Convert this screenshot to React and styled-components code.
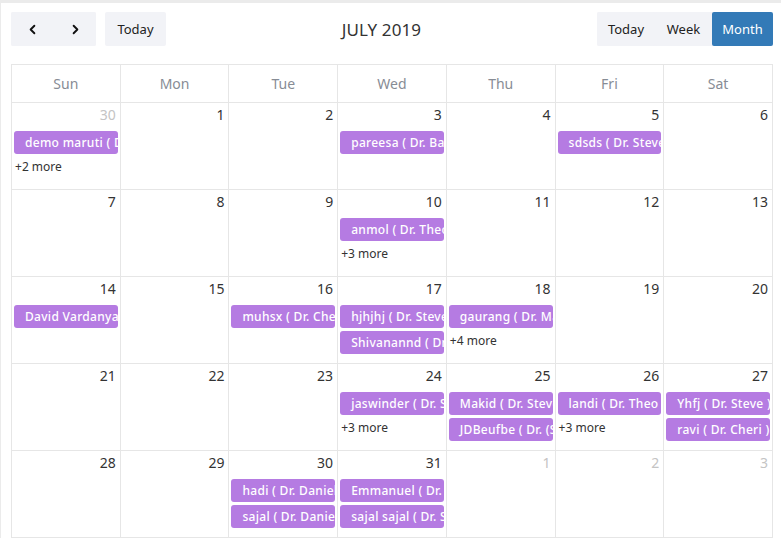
import React from "react";
import styled, { createGlobalStyle } from "styled-components";
import { ChevronLeft, ChevronRight } from "lucide-react";

const GlobalStyle = createGlobalStyle`
  body {
    margin: 0;
    background: #ebebeb;
    font-family: "Noto Sans", "Open Sans", sans-serif;
    overflow: hidden;
  }
`;

const Card = styled.div`
  margin: 3px 0 0 1px;
  padding: 9px 8px 0 10px;
  background: #fff;
  height: 535px;
  box-sizing: border-box;
`;

const Toolbar = styled.div`
  display: flex;
  align-items: center;
  height: 34px;
  margin-bottom: 18px;
`;

const Left = styled.div`
  display: flex;
  gap: 9px;
`;

const Group = styled.div`
  display: flex;
  background: #f2f3f7;
  border-radius: 2px;
`;

const Button = styled.button`
  border: 0;
  height: 34px;
  padding: 0;
  font-family: inherit;
  font-size: 13px;
  color: ${(p) => (p.$active ? "#fff" : "#222")};
  background: ${(p) => (p.$active ? "#337ab7" : "#f2f3f7")};
  display: flex;
  align-items: center;
  justify-content: center;
  width: ${(p) => p.$w || "auto"};
  border-radius: 2px;
`;

const Title = styled.h2`
  flex: 1;
  text-align: center;
  margin: 0;
  font-size: 17px;
  font-weight: 400;
  color: #333;
  letter-spacing: 0.1px;
`;

const Grid = styled.div`
  display: grid;
  grid-template-columns: repeat(7, 1fr);
  grid-template-rows: 38px repeat(5, 87px);
  border-top: 1px solid #e6e6e6;
  border-left: 1px solid #e6e6e6;
`;

const HeadCell = styled.div`
  border-right: 1px solid #e6e6e6;
  border-bottom: 1px solid #e6e6e6;
  display: flex;
  align-items: center;
  justify-content: center;
  font-size: 14px;
  color: #878c95;
`;

const DayCell = styled.div`
  border-right: 1px solid #e6e6e6;
  border-bottom: 1px solid #e6e6e6;
  display: flex;
  flex-direction: column;
  padding: 2px 2px 0 2px;
  min-width: 0;
`;

const DayNum = styled.div`
  text-align: right;
  font-size: 14px;
  line-height: 20px;
  padding-right: 2px;
  margin-bottom: 6px;
  color: ${(p) => (p.$other ? "#c4c4c4" : "#333")};
`;

const Event = styled.div`
  background: #b57be2;
  color: #fff;
  font-size: 12px;
  font-weight: 500;
  letter-spacing: 0.3px;
  height: 23px;
  line-height: 23px;
  border-radius: 3px;
  padding-left: 11px;
  margin-bottom: 3px;
  white-space: nowrap;
  overflow: hidden;
`;

const More = styled.div`
  font-size: 12px;
  color: #333;
  padding-left: 1px;
  line-height: 16px;
  margin-top: 2px;
`;

const days = ["Sun", "Mon", "Tue", "Wed", "Thu", "Fri", "Sat"];

const weeks = [
  [
    { n: 30, other: true, ev: ["demo maruti ( Dr. Steve )"], more: 2 },
    { n: 1 },
    { n: 2 },
    { n: 3, ev: ["pareesa ( Dr. Baker )"] },
    { n: 4 },
    { n: 5, ev: ["sdsds ( Dr. Steve )"] },
    { n: 6 },
  ],
  [
    { n: 7 },
    { n: 8 },
    { n: 9 },
    { n: 10, ev: ["anmol ( Dr. Theo )"], more: 3 },
    { n: 11 },
    { n: 12 },
    { n: 13 },
  ],
  [
    { n: 14, ev: ["David Vardanyan ( Dr. Steve )"] },
    { n: 15 },
    { n: 16, ev: ["muhsx ( Dr. Cheri )"] },
    { n: 17, ev: ["hjhjhj ( Dr. Steve )", "Shivanannd ( Dr. Steve )"] },
    { n: 18, ev: ["gaurang ( Dr. Mark )"], more: 4 },
    { n: 19 },
    { n: 20 },
  ],
  [
    { n: 21 },
    { n: 22 },
    { n: 23 },
    { n: 24, ev: ["jaswinder ( Dr. Steve )"], more: 3 },
    { n: 25, ev: ["Makid ( Dr. Steve )", "JDBeufbe ( Dr. (Steve) )"] },
    { n: 26, ev: ["landi ( Dr. Theo )"], more: 3 },
    { n: 27, ev: ["Yhfj ( Dr. Steve )", "ravi ( Dr. Cheri )"] },
  ],
  [
    { n: 28 },
    { n: 29 },
    { n: 30, ev: ["hadi ( Dr. Daniel )", "sajal ( Dr. Daniel )"] },
    { n: 31, ev: ["Emmanuel ( Dr. Steve )", "sajal sajal ( Dr. Steve )"] },
    { n: 1, other: true },
    { n: 2, other: true },
    { n: 3, other: true },
  ],
];

const App = () => {
  return (
    <>
      <GlobalStyle />
      <Card>
        <Toolbar>
          <Left>
            <Group>
              <Button $w="43px">
                <ChevronLeft size={15} strokeWidth={3} color="#111" />
              </Button>
              <Button $w="42px">
                <ChevronRight size={15} strokeWidth={3} color="#111" />
              </Button>
            </Group>
            <Button $w="61px">Today</Button>
          </Left>
          <Title>JULY 2019</Title>
          <Group>
            <Button $w="58px">Today</Button>
            <Button $w="57px">Week</Button>
            <Button $w="61px" $active>
              Month
            </Button>
          </Group>
        </Toolbar>
        <Grid>
          {days.map((d) => (
            <HeadCell key={d}>{d}</HeadCell>
          ))}
          {weeks.flat().map((c, i) => (
            <DayCell key={i}>
              <DayNum $other={c.other}>{c.n}</DayNum>
              {(c.ev || []).map((e) => (
                <Event key={e}>{e}</Event>
              ))}
              {c.more && <More>+{c.more} more</More>}
            </DayCell>
          ))}
        </Grid>
      </Card>
    </>
  );
};

export default App;
